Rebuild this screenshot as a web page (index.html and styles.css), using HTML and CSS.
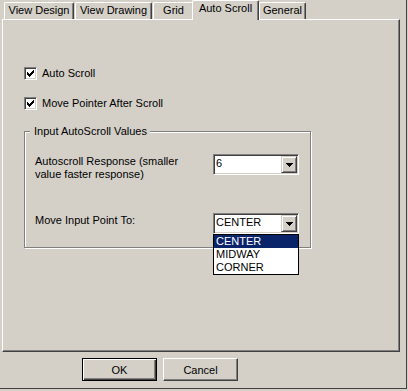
FILE: index.html
```html
<!DOCTYPE html>
<html>
<head>
<meta charset="utf-8">
<link rel="stylesheet" href="styles.css">
</head>
<body>
<div class="dialog">
  <div class="tabs">
    <div class="tab t1">View Design</div>
    <div class="tab t2">View Drawing</div>
    <div class="tab t3">Grid</div>
    <div class="tab sel">Auto Scroll</div>
    <div class="tab t5">General</div>
  </div>
  <div class="panel">
    <div class="cb">
      <span class="box"><svg width="7" height="7" viewBox="0 0 7 7" shape-rendering="crispEdges"><polygon points="0,2 1,2 1,3 2,3 2,4 3,4 3,3 4,3 4,2 5,2 5,1 6,1 6,0 7,0 7,3 6,3 6,4 5,4 5,5 4,5 4,6 3,6 3,7 2,7 2,6 1,6 1,5 0,5" fill="#000"/></svg></span>
      <span>Auto Scroll</span>
    </div>
    <div class="cb cb2">
      <span class="box"><svg width="7" height="7" viewBox="0 0 7 7" shape-rendering="crispEdges"><polygon points="0,2 1,2 1,3 2,3 2,4 3,4 3,3 4,3 4,2 5,2 5,1 6,1 6,0 7,0 7,3 6,3 6,4 5,4 5,5 4,5 4,6 3,6 3,7 2,7 2,6 1,6 1,5 0,5" fill="#000"/></svg></span>
      <span>Move Pointer After Scroll</span>
    </div>
    <div class="group">
      <span class="legend">Input AutoScroll Values</span>
      <div class="row">
        <span class="lbl">Autoscroll Response (smaller value faster response)</span>
        <div class="combo">
          <span class="val">6</span>
          <span class="drop"><svg width="7" height="4" viewBox="0 0 7 4" shape-rendering="crispEdges"><polygon points="0,0 7,0 7,1 6,1 6,2 5,2 5,3 4,3 4,4 3,4 3,3 2,3 2,2 1,2 1,1 0,1" fill="#000"/></svg></span>
        </div>
      </div>
      <div class="row row2">
        <span class="lbl">Move Input Point To:</span>
        <div class="combo">
          <span class="val">CENTER</span>
          <span class="drop"><svg width="7" height="4" viewBox="0 0 7 4" shape-rendering="crispEdges"><polygon points="0,0 7,0 7,1 6,1 6,2 5,2 5,3 4,3 4,4 3,4 3,3 2,3 2,2 1,2 1,1 0,1" fill="#000"/></svg></span>
          <ul class="list">
            <li class="hi">CENTER</li>
            <li>MIDWAY</li>
            <li>CORNER</li>
          </ul>
        </div>
      </div>
    </div>
  </div>
  <div class="buttons">
    <button class="btn def">OK</button>
    <button class="btn">Cancel</button>
  </div>
</div>
</body>
</html>
```

FILE: styles.css
```css
* { box-sizing: border-box; }

body {
  margin: 0;
  background: #d4d0c8;
  font-family: "Liberation Sans", Arial, sans-serif;
  font-size: 11px;
  line-height: 13px;
  color: #000;
}

.dialog {
  width: 407px;
  height: 389px;
  border-right: 1px solid #404040;
  border-bottom: 1px solid #404040;
}

.tabs {
  display: flex;
  align-items: flex-end;
  height: 19px;
  padding-left: 4px;
  position: relative;
  z-index: 2;
}

.tab {
  height: 17px;
  padding-top: 1px;
  text-align: center;
  white-space: nowrap;
  background: #d4d0c8;
  border-top: 1px solid #fff;
  border-left: 1px solid #fff;
  border-right: 1px solid #404040;
  box-shadow: inset -1px 0 #808080;
  border-radius: 2px 2px 0 0;
}

.t1 { width: 70px; margin-right: 1px; }
.t2 { width: 77px; margin-right: 1px; }
.t3 { width: 41px; }
.t5 { width: 47px; }

.sel {
  width: 67px;
  height: 20px;
  margin-left: -2px;
  margin-bottom: -1px;
  position: relative;
  z-index: 3;
}

.panel {
  width: 398px;
  height: 333px;
  margin-left: 2px;
  padding: 47px 0 0 21px;
  border-top: 1px solid #fff;
  border-left: 1px solid #fff;
  border-right: 1px solid #404040;
  border-bottom: 1px solid #404040;
  box-shadow: inset -1px -1px #808080;
  position: relative;
  z-index: 1;
}

.cb {
  display: flex;
  align-items: center;
  gap: 5px;
  height: 13px;
}

.cb2 { margin-top: 17px; }

.box {
  width: 13px;
  height: 13px;
  padding: 2px;
  background: #fff;
  border-top: 1px solid #808080;
  border-left: 1px solid #808080;
  border-bottom: 1px solid #fff;
  border-right: 1px solid #fff;
  box-shadow: inset 1px 1px #404040, inset -1px -1px #d4d0c8;
}

.box svg { display: block; }

.group {
  position: relative;
  margin-top: 21px;
  width: 287px;
  height: 117px;
  padding: 22px 0 0 10px;
  border: 1px solid #808080;
  box-shadow: inset 1px 1px #fff, 1px 1px #fff;
}

.legend {
  position: absolute;
  top: -7px;
  left: 5px;
  padding: 0 3px 0 4px;
  background: #d4d0c8;
}

.row {
  display: grid;
  grid-template-columns: 178px 86px;
  align-items: start;
}

.row2 { margin-top: 32px; }

.lbl {
  max-width: 150px;
  padding-top: 1px;
}

.combo {
  position: relative;
  display: flex;
  width: 86px;
  height: 21px;
  padding: 1px;
  background: #fff;
  border-top: 1px solid #808080;
  border-left: 1px solid #808080;
  border-bottom: 1px solid #fff;
  border-right: 1px solid #fff;
  box-shadow: inset 1px 1px #404040, inset -1px -1px #d4d0c8;
}

.val {
  flex: 1;
  padding-left: 1px;
  line-height: 15px;
}

.drop {
  display: flex;
  align-items: center;
  justify-content: center;
  width: 16px;
  height: 17px;
  padding: 1px 0 0 1px;
  background: #d4d0c8;
  border-top: 1px solid #d4d0c8;
  border-left: 1px solid #d4d0c8;
  border-bottom: 1px solid #404040;
  border-right: 1px solid #404040;
  box-shadow: inset 1px 1px #fff, inset -1px -1px #808080;
}

.drop svg { display: block; }

.list {
  position: absolute;
  top: calc(100% + 1px);
  left: -1px;
  width: 86px;
  margin: 0;
  padding: 0;
  list-style: none;
  background: #fff;
  border: 1px solid #000;
  z-index: 5;
}

.list li {
  height: 13px;
  line-height: 13px;
  padding-left: 2px;
}

.list .hi {
  background: #0a246a;
  color: #fff;
}

.buttons {
  display: flex;
  gap: 6px;
  padding-left: 82px;
  margin-top: 6px;
}

.btn {
  width: 75px;
  height: 23px;
  padding: 0;
  font-family: "Liberation Sans", Arial, sans-serif;
  font-size: 11px;
  color: #000;
  background: #d4d0c8;
  border-top: 1px solid #fff;
  border-left: 1px solid #fff;
  border-bottom: 1px solid #404040;
  border-right: 1px solid #404040;
  box-shadow: inset -1px -1px #808080;
  border-radius: 0;
}

.btn.def {
  border: 1px solid #000;
  box-shadow: inset 1px 1px #fff, inset -1px -1px #404040, inset -2px -2px #808080;
}
```
